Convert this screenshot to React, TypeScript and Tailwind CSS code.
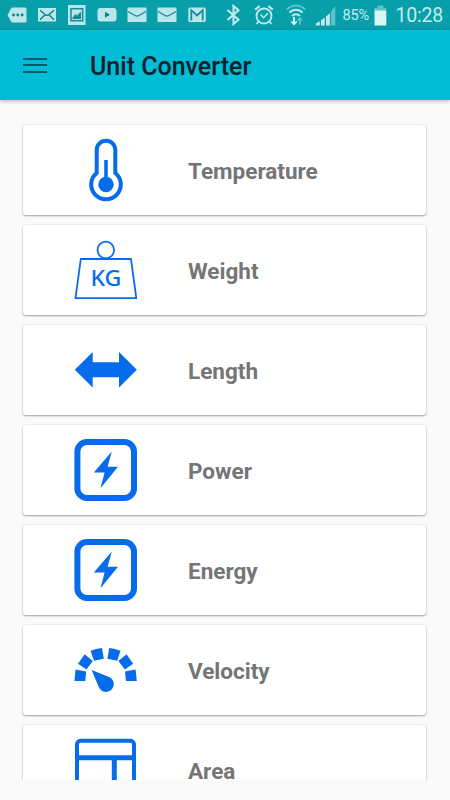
import React from 'react';

const BLUE = '#066cec';

function ThermometerIcon() {
  return (
    <svg viewBox="0 0 64 64" className="h-16 w-16" fill="none">
      <path d="M22.7 35V12A9.3 9.3 0 0 1 41.3 12V35A14.8 14.8 0 1 1 22.7 35Z" stroke={BLUE} strokeWidth="4" />
      <path d="M32 22V44" stroke={BLUE} strokeWidth="3.6" />
      <circle cx="32" cy="46.5" r="7.7" fill={BLUE} />
    </svg>
  );
}

function WeightIcon() {
  return (
    <svg viewBox="0 0 64 64" className="h-16 w-16" fill="none">
      <circle cx="31.8" cy="12" r="8.3" stroke={BLUE} strokeWidth="1.8" />
      <path d="M6.8 21H57L62.3 60.2H1.5Z" stroke={BLUE} strokeWidth="1.8" strokeLinejoin="round" />
      <text
        x="16.4"
        y="48"
        fill={BLUE}
        fontSize="22.5"
        fontWeight="500"
        textLength="31"
        lengthAdjust="spacingAndGlyphs"
        fontFamily="'Noto Sans', sans-serif"
      >
        KG
      </text>
    </svg>
  );
}

function LengthIcon() {
  return (
    <svg viewBox="0 0 64 64" className="h-16 w-16" fill={BLUE}>
      <path d="M.8 31.8L18.7 14V24.3H45V14L62.8 31.8L45 49.5V39.3H18.7V49.5Z" />
    </svg>
  );
}

function BoltIcon() {
  return (
    <svg viewBox="0 0 64 64" className="h-16 w-16" fill="none">
      <rect x="3.4" y="4" width="56.6" height="56" rx="9.5" stroke={BLUE} strokeWidth="6" />
      <path d="M37.8 13.5L19.8 34.5H30.6L26.5 50.2L44 28.8H33.6Z" fill={BLUE} />
    </svg>
  );
}

function GaugeIcon() {
  return (
    <svg viewBox="0 0 64 64" className="h-16 w-16" fill={BLUE}>
      {/* left half of the dial, mirrored for the right */}
      <path d="M1.6 31.6L12.2 33.6L11.3 43H.4Z" />
      <path d="M10.7 16.3L18.8 23L12.4 31.6L4 25.8Z" />
      <path d="M16.6 12.8Q22 10.4 28 9.9L29.8 20.7L20 22.8Z" />
      <g transform="matrix(-1 0 0 1 63.2 0)">
        <path d="M1.6 31.6L12.2 33.6L11.3 43H.4Z" />
        <path d="M10.7 16.3L18.8 23L12.4 31.6L4 25.8Z" />
        <path d="M16.6 12.8Q22 10.4 28 9.9L29.8 20.7L20 22.8Z" />
      </g>
      <path d="M17.6 32L34.5 38.7A7.8 7.8 0 1 1 25 49.6Z" />
    </svg>
  );
}

function AreaIcon() {
  return (
    <svg viewBox="0 0 64 64" className="h-16 w-16" fill="none" stroke={BLUE}>
      <rect x="3" y="2.8" width="57" height="58" rx="3.5" strokeWidth="4" />
      <path d="M3 19.8H60M40.3 19.8V60" strokeWidth="5" />
    </svg>
  );
}

const units = [
  { name: 'Temperature', icon: ThermometerIcon },
  { name: 'Weight', icon: WeightIcon },
  { name: 'Length', icon: LengthIcon },
  { name: 'Power', icon: BoltIcon },
  { name: 'Energy', icon: BoltIcon },
  { name: 'Velocity', icon: GaugeIcon },
  { name: 'Area', icon: AreaIcon },
];

function Envelope() {
  return (
    <svg width="20" height="16" viewBox="0 0 20 16">
      <rect x=".5" y=".5" width="19" height="14.5" rx=".8" fill="#b9e7ec" />
      <path d="M1 4.5L8 8.5Q10 9.5 12 8.5L19 4.5" fill="none" stroke="#168b95" strokeWidth="1.3" />
    </svg>
  );
}

function StatusBar() {
  return (
    <div className="flex h-[30px] shrink-0 items-center bg-[#069faa] font-[Roboto,sans-serif] text-[#c3ebee]">
      {/* notifications */}
      <div className="ml-[1.5px] grid w-[210px] grid-cols-7 place-items-center">
        <svg width="20" height="16" viewBox="0 0 20 16">
          <path d="M6 .5H18Q19.5 .5 19.5 2V14Q19.5 15.5 18 15.5H6Q4.8 15.5 4 14.5L.5 8L4 1.5Q4.8 .5 6 .5Z" fill="#b9e7ec" />
          <g fill="#0d7f8a">
            <circle cx="6.5" cy="8" r="1.4" />
            <circle cx="10.8" cy="8" r="1.4" />
            <circle cx="15.1" cy="8" r="1.4" />
          </g>
        </svg>
        <svg width="18" height="14" viewBox="0 0 18 14">
          <rect width="18" height="13.5" fill="#b9e7ec" />
          <path d="M2 2.2L7 6.5Q9 8 11 6.5L16 2.2M2 11.8L6.8 7M16 11.8L11.2 7" fill="none" stroke="#0d7f8a" strokeWidth="1.4" />
        </svg>
        <svg width="18" height="20" viewBox="0 0 18 20">
          <rect width="17.5" height="20" fill="#b9e7ec" />
          <rect x="3" y="3.7" width="11.7" height="12" fill="none" stroke="#168b95" strokeWidth="1.5" />
          <path d="M4.5 12.5L7.5 9L9 10.5L13 6.5V14H4.5Z" fill="#168b95" />
        </svg>
        <svg width="20" height="14" viewBox="0 0 20 14">
          <rect x=".5" width="19" height="13.5" rx="3" fill="#b9e7ec" />
          <path d="M8 3.8L13 6.8L8 9.8Z" fill="#0d7f8a" />
        </svg>
        <Envelope />
        <Envelope />
        <svg width="18" height="16" viewBox="0 0 18 16">
          <rect x=".3" y=".5" width="17.5" height="14.5" rx="1.5" fill="#b9e7ec" />
          <path d="M3.3 13.5V3.2L9 8.5L14.7 3.2V13.5" fill="none" stroke="#168b95" strokeWidth="1.8" />
        </svg>
      </div>

      {/* system icons */}
      <svg className="ml-[14px]" width="15" height="22" viewBox="0 0 15 22">
        <path d="M1.5 6L12.5 15.7L7.5 20V2L12.5 6.3L1.5 16" fill="none" stroke="#c3ebee" strokeWidth="2.1" />
      </svg>
      <svg className="ml-[13px]" width="20" height="22" viewBox="0 0 20 22" fill="none" stroke="#c3ebee">
        <circle cx="10" cy="12" r="7.5" strokeWidth="1.8" />
        <path d="M6.5 10.5L9.5 13.7L14 9.3" strokeWidth="1.4" />
        <path d="M1.2 5.7L5.7 2M18.8 5.7L14.3 2" strokeWidth="2.2" />
        <path d="M4.5 17.5L2.7 20M15.5 17.5L17.3 20" strokeWidth="1.7" />
      </svg>
      <svg className="ml-[12px]" width="20" height="22" viewBox="0 0 20 22" fill="none">
        <path d="M.8 5.2Q10 -2.2 19.2 5.2" stroke="#5fc3ca" strokeWidth="1.8" />
        <path d="M3.3 8.6Q10 3 16.7 8.6M6 11.9Q10 8.6 14 11.9" stroke="#c3ebee" strokeWidth="2" />
        <path d="M8 13V19M5.3 17.5L8 20.3L10.7 17.5" stroke="#e4f8f8" strokeWidth="1.8" />
        <path d="M13.8 21V15M11.5 16.6L13.8 14.2L16.1 16.6" stroke="#5fc3ca" strokeWidth="1.6" />
      </svg>
      <svg className="ml-[10px]" width="20" height="21" viewBox="0 0 20 21" fill="#c3ebee">
        <path d="M0 18.5L3.7 16.2V20.5H0ZM5 15.5L8.7 12.5V20.5H5ZM10 11.5L13.9 8.2V20.5H10Z" />
        <path d="M15 6.5L19.3 1V20.5H15Z" fill="#5fc3ca" />
      </svg>
      <span className="ml-[7px] w-[27px] pt-[2px] text-[14.5px] leading-none tracking-[-0.2px] whitespace-nowrap">85%</span>
      <svg className="ml-[4px]" width="13" height="21" viewBox="0 0 13 21">
        <path d="M3.5 .5H9.5V3H12.3V6H.5V3H3.5Z" fill="#5fc3ca" />
        <path d="M.5 5.5H12.3V20.5H.5Z" fill="#d9f5f5" />
      </svg>
      <span className="ml-[9px] pt-[2px] text-[19.5px] leading-none font-normal tracking-[-0.2px] whitespace-nowrap">10:28</span>
    </div>
  );
}

export default function App() {
  return (
    <div className="flex h-[800px] w-[450px] flex-col overflow-hidden bg-[#fafafa] font-[Roboto,sans-serif]">
      <StatusBar />

      <header className="z-10 flex h-[70px] shrink-0 items-center bg-[#00bcd4] pl-[23px] shadow-[0_1px_4px_rgba(0,0,0,0.3)]">
        <button className="flex w-6 flex-col gap-[4.5px]" aria-label="Menu">
          <span className="h-[2px] w-full bg-[#035a6c]" />
          <span className="h-[2px] w-full bg-[#035a6c]" />
          <span className="h-[2px] w-full bg-[#035a6c]" />
        </button>
        <h1 className="ml-[43px] pt-[2px] text-[25px] leading-none font-medium text-[#06212b]">Unit Converter</h1>
      </header>

      <main className="flex h-[680px] shrink-0 flex-col gap-[10px] overflow-hidden px-[23px] pt-[25px]">
        {units.map(({ name, icon: Icon }) => (
          <div
            key={name}
            className="flex h-[90px] w-[403px] shrink-0 items-center rounded-[3px] bg-white pl-[51px] shadow-[0_1px_2px_rgba(0,0,0,0.35),0_0_2px_rgba(0,0,0,0.12)]"
          >
            <Icon />
            <span className="ml-[50px] pt-[2px] text-[22.5px] leading-none font-bold text-[#757575]">{name}</span>
          </div>
        ))}
      </main>
    </div>
  );
}
